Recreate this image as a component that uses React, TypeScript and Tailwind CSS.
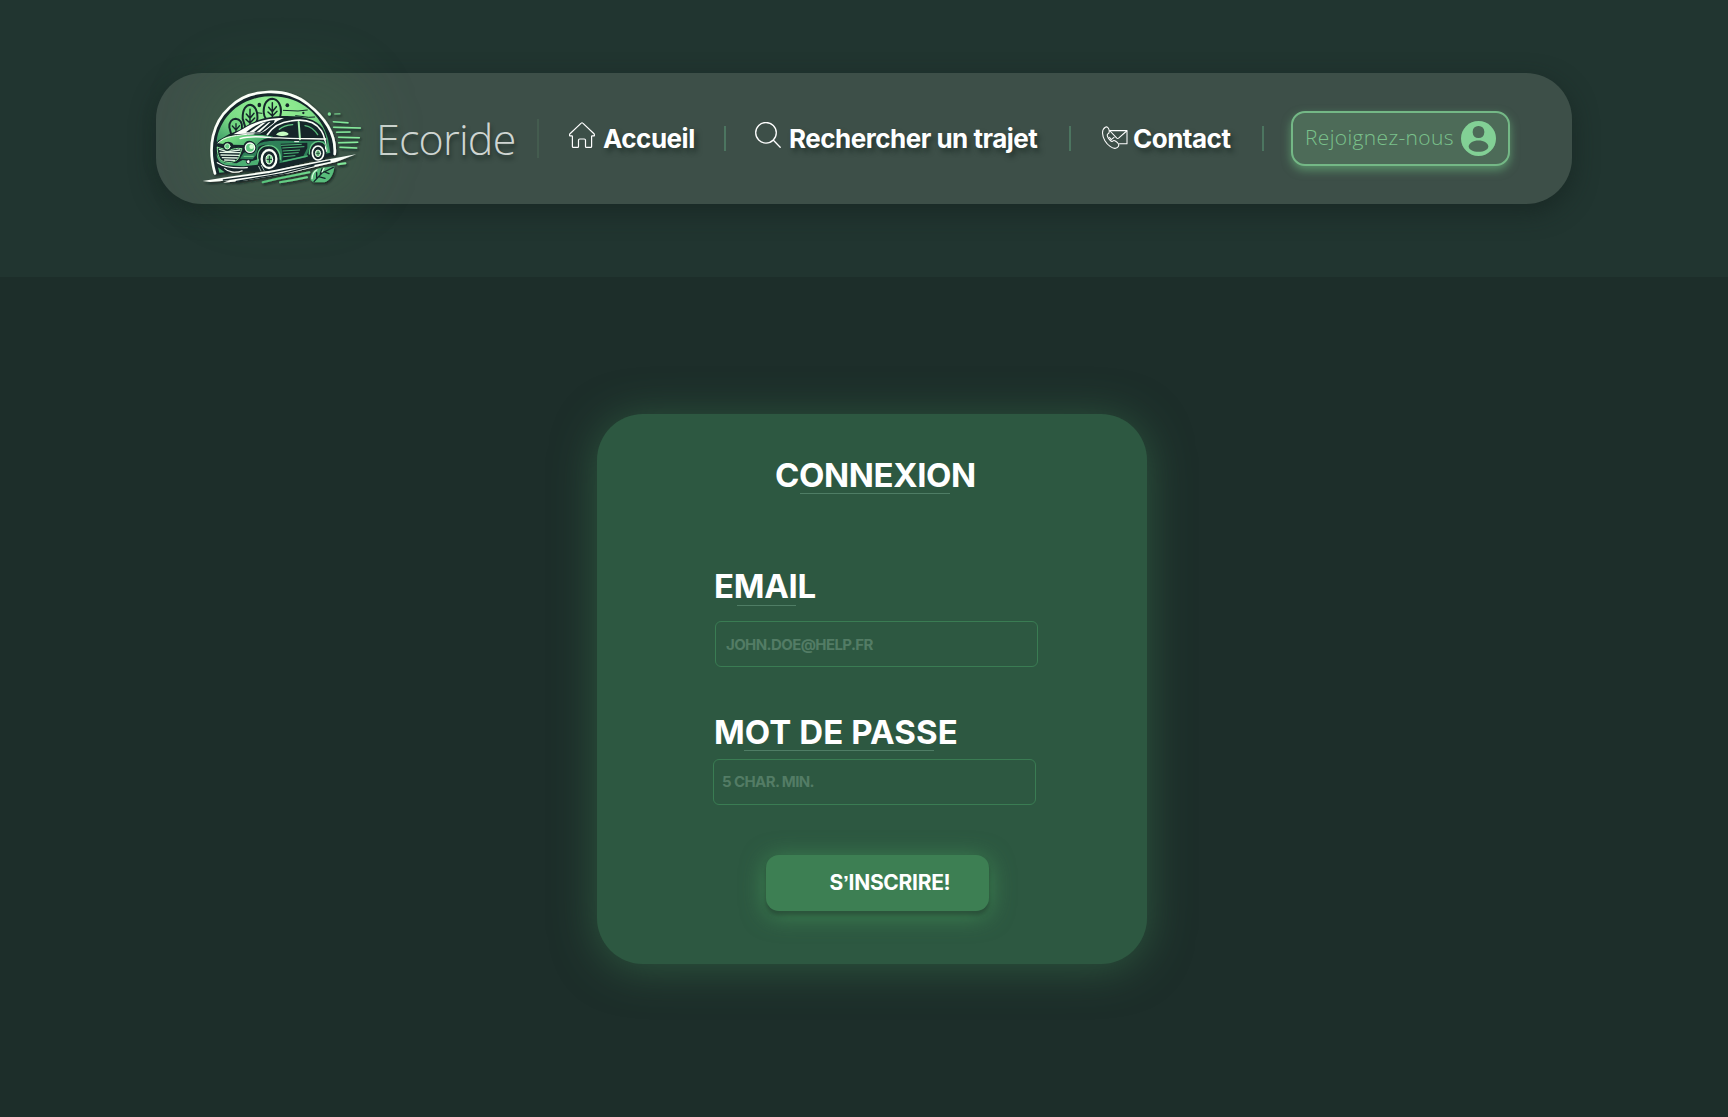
import React from "react";

function CarLogo() {
  const dark = "#14282b";
  const white = "#fbfff8";
  return (
    <svg viewBox="36 44 483 291" className="relative h-[97px] w-[161px] overflow-visible" fill="none" strokeLinecap="round" strokeLinejoin="round">
      <defs>
        <radialGradient id="sky" cx="0.5" cy="0.2" r="0.75">
          <stop offset="0" stopColor="#98f295" />
          <stop offset="0.55" stopColor="#7bdc86" />
          <stop offset="1" stopColor="#3f9d68" />
        </radialGradient>
        <linearGradient id="hood" x1="0" y1="0" x2="1" y2="0.3">
          <stop offset="0" stopColor="#8df08c" />
          <stop offset="0.6" stopColor="#5cc478" />
          <stop offset="1" stopColor="#3f9c68" />
        </linearGradient>
        <linearGradient id="speed" gradientUnits="userSpaceOnUse" x1="216" y1="0" x2="512" y2="0">
          <stop offset="0" stopColor="#58c37c" />
          <stop offset="1" stopColor="#8bf0a0" />
        </linearGradient>
        <filter id="cast" x="-10%" y="-10%" width="125%" height="125%">
          <feDropShadow dx="4" dy="5" stdDeviation="2.500" floodColor="#0d1b19" floodOpacity="0.8" />
        </filter>
      </defs>
      <g filter="url(#cast)">
        {/* arch */}
        <path d="M78 297C50 222 64 142 116 94C175 36 290 34 357 86C411 128 436 180 432 240L76 297Z" fill={dark} />
        <path d="M75 294C52 214 68 142 118 97C176 38 289 34 354 87C408 130 438 182 434 236" stroke={white} strokeWidth="8" />
        <path d="M80 196C90 128 148 64 243 63C336 62 394 122 414 190L421 232L404 236L370 190L300 130L150 180L82 202Z" fill="url(#sky)" />
        <path d="M84 276L88 292L104 291Z" fill="#57ba78" />
        {/* trees */}
        <g stroke={dark} strokeWidth="6">
          <path d="M118 156C117 140 126 130 137 130C150 131 158 142 156 160L150 178H124Z" fill="#72d681" />
          <path d="M138 145V180M127 152L138 164L149 151" strokeWidth="4" />
          <path d="M158 130C157 101 169 88 181 88C195 90 204 107 202 132L194 156H166Z" fill="#7fe287" />
          <path d="M180 102V150M169 116L180 129L192 114M168 132L180 143L194 128" strokeWidth="4.500" />
          <path d="M221 110C221 84 232 70 247 70C263 71 274 88 273 110C272 128 262 138 247 138C232 138 222 128 221 110Z" fill="#8bec90" />
          <path d="M247 82V134M236 96L247 109L259 94M234 110L247 122L261 108" strokeWidth="4.500" />
        </g>
        <g fill={dark}>
          <ellipse cx="208" cy="89" rx="5.500" ry="7" />
          <ellipse cx="292" cy="90" rx="5.500" ry="6" />
          <circle cx="340" cy="113" r="3.500" />
        </g>
        <path d="M280 105L324 107L352 104M317 121L356 126L374 125M200 112L216 114" stroke={dark} strokeWidth="3" />
        {/* body, windshield and roof */}
        <path d="M76 216L84 196L118 176L148 164C190 136 228 123 275 122C330 120 378 128 398 158C412 182 412 205 408 240L262 284L190 288L120 284L90 270C76 252 72 234 76 216Z" fill={dark} />
        <path d="M130 177L160 160C196 138 234 128 282 128L262 137L226 166L212 174C184 174 156 176 130 177Z" fill={white} />
        <path d="M168 171C190 152 216 138 254 134L252 142L213 172Z" fill={dark} />
        <path d="M178 170L216 144L228 141L192 170ZM200 170L236 141L242 140L210 170Z" fill={white} />
        <path d="M232 178C250 152 272 140 302 137C342 130 375 138 394 166C404 182 408 200 408 228" stroke={white} strokeWidth="5" />
        <path d="M268 162C278 153 294 149 308 148" stroke="#65c984" strokeWidth="4" />
        <path d="M345 151C362 154 374 164 383 178" stroke="#58b878" strokeWidth="4" />
        <path d="M326 140L330 192" stroke="#a6f0ae" strokeWidth="6" />
        <path d="M258 178C266 166 290 165 296 176C290 184 272 183 258 178Z" fill="#c6fdc2" />
        {/* hood and flank */}
        <path d="M86 204C96 184 118 180 164 178C196 177 226 179 250 184L222 192C208 198 202 206 198 214C192 192 168 190 161 209L130 208C124 197 108 197 100 206Z" fill="url(#hood)" />
        <path d="M84 203C100 184 142 178 190 176" stroke={white} strokeWidth="3" />
        <path d="M150 190C172 183 206 183 243 187C307 190 355 190 407 191" stroke={white} strokeWidth="4" />
        <path d="M206 206C222 194 266 196 310 197L405 198L406 207C388 193 364 202 358 220L348 246L268 264C276 224 243 196 206 214L198 240L188 252L150 250L160 234Z" fill="#2f8059" />
        <path d="M272 205L352 202L352 218L340 242L276 256C280 236 274 218 272 205Z" fill={dark} />
        <path d="M274 210L334 207M278 218L342 214M279 227L329 224M282 235L325 232M281 244L315 241" stroke="#4fb778" strokeWidth="3" />
        <path d="M314 199H326" stroke={white} strokeWidth="3" />
        <path d="M280 258L352 242" stroke="#4fb778" strokeWidth="4" />
        {/* front end */}
        <path d="M80 236C80 254 92 266 112 270L160 273L203 268L209 250L184 258L158 254L140 264L104 262C90 256 86 246 80 236Z" fill="#4cae72" />
        <path d="M82 216C81 237 88 255 100 258C120 265 136 260 145 250L156 220C142 217 130 221 121 224C105 223 94 219 82 216Z" fill={dark} stroke="#8be89b" strokeWidth="3" />
        <path d="M88 222L112 229L150 224M90 231L149 232M93 239L147 240M97 247L142 248M104 254L134 255" stroke="#e2f4e4" strokeWidth="4" />
        <path d="M82 262C104 276 133 280 172 277M104 280C116 292 140 294 156 286" stroke={white} strokeWidth="3.500" />
        <circle cx="112" cy="213" r="13" fill={dark} />
        <circle cx="112" cy="213" r="8" fill="#65c982" stroke="#d6ffd3" strokeWidth="3" />
        <circle cx="180" cy="217" r="19" fill={dark} />
        <circle cx="180" cy="217" r="14" fill="#63c982" stroke={white} strokeWidth="4" />
        <circle cx="185" cy="214" r="7" fill="#d4ffd2" />
        <circle cx="175" cy="259" r="6" fill={white} stroke={dark} strokeWidth="3" />
        <path d="M162 243H190" stroke="#75d58a" strokeWidth="3" />
        {/* wheels */}
        <path d="M204 254C198 226 216 209 238 211C258 212 272 229 271 252" stroke="#6cd08a" strokeWidth="4" />
        <ellipse cx="237" cy="251" rx="30" ry="35" fill={dark} />
        <ellipse cx="237" cy="251" rx="22" ry="27" stroke={white} strokeWidth="7" />
        <ellipse cx="238" cy="252" rx="10" ry="14" fill="#83dd94" stroke={white} strokeWidth="3" />
        <path d="M238 243V261M231 252H245" stroke={dark} strokeWidth="3" />
        <path d="M358 236C358 211 371 198 387 198C402 199 412 212 414 230" stroke="#64c885" strokeWidth="4" />
        <ellipse cx="384" cy="233" rx="24" ry="28" fill={dark} />
        <ellipse cx="384" cy="233" rx="17" ry="21" stroke={white} strokeWidth="5" />
        <ellipse cx="384" cy="234" rx="8" ry="10" fill="#83dd94" stroke={white} strokeWidth="2.500" />
        <path d="M384 228V240M379 234H389" stroke={dark} strokeWidth="2" />
        {/* road */}
        <path d="M38 317L118 304L250 285L360 262L498 237L438 260L300 293L170 315L100 322L120 315L60 320Z" fill={white} />
        <path d="M100 314L238 295L420 257M139 318L278 295L372 271" stroke={dark} strokeWidth="4" />
        <path d="M214 270L222 285M206 273L213 287" stroke="#a8b9b2" strokeWidth="3" />
        {/* speed stripes */}
        <g stroke="url(#speed)" strokeWidth="6">
          <path d="M218 321L262 310L358 291M270 321L310 314L351 306M445 267L466 264" />
          <path d="M434 116L450 115.500" strokeWidth="3" />
          <path d="M430 139L474 142M431 156L511 158M440 171L480 170M446 186L508 187M446 202L503 201M450 216L500 218" strokeWidth="4.500" />
        </g>
        <circle cx="418" cy="116" r="5" fill="#7fe095" />
        {/* leaf */}
        <path d="M362 314C360 295 371 281 392 278L433 273C432 297 419 317 404 321H370Z" fill="#58bd7b" />
        <path d="M372 319L396 293L430 276M380 309V292M391 296L396 280M386 304L405 309M402 289L417 295" stroke={dark} strokeWidth="4" />
        <path d="M366 310C367 297 372 288 381 283M396 290L402 279" stroke="#dcffe2" strokeWidth="3.500" />
      </g>
    </svg>
  );
}

function HomeIcon() {
  return (
    <svg viewBox="0 0 26 26" className="mb-[7px] size-[26px] shrink-0" fill="none" stroke="white" strokeWidth="1.2" strokeLinejoin="round" strokeLinecap="round">
      <path d="M12.2 1.1a1.1 1.1 0 0 1 1.6 0L25 11.7q.6.7.3 2.2h-2.2q-.5 0-.5.6v9.9q0 1-1 1h-4.300q-.8 0-.8-.9v-6.300q0-1.200-1.200-1.200h-4.600q-1.200 0-1.200 1.200v6.300q0 .9-.8.9H4.400q-1 0-1-1v-9.900q0-.600-.5-.600H.7q-.4-1.500.3-2.200Z" />
    </svg>
  );
}

function SearchIcon() {
  return (
    <svg viewBox="0 0 26 26" className="mb-[7px] size-[26px] shrink-0" fill="none" stroke="white" strokeWidth="1.3" strokeLinecap="round">
      <circle cx="11" cy="10.8" r="10.3" />
      <path d="M18.400 18.200L25.200 25.200" />
    </svg>
  );
}

function ContactIcon() {
  return (
    <svg viewBox="0 0 26 24" className="mb-[2px] h-[24px] w-[26px] shrink-0" fill="none" stroke="white" strokeWidth="1.050" strokeLinejoin="round" strokeLinecap="round">
      <path d="M3.300 1.200C5 .2 6.600 1.700 7.100 4C7.600 6.200 7.300 7.400 5.700 8.100C4.500 8.800 6 12 7.500 13.600C8.900 15.200 10 16 11.100 14.900C12.300 13.600 15.200 16.100 16.400 17.800C17.500 19.600 16 21.700 13.600 22.300C10.500 22.900 5.600 19.200 2.900 14.700C.2 10-.8 3.700 3.300 1.200Z" />
      <path d="M7.700 4.600H25V17.700H17.500" />
      <path d="M8 5L14.800 12.200Q15.700 12.900 16.600 12.200L24.700 5M7.500 11.300L9.200 13.600L12 11.300" />
    </svg>
  );
}

function UserIcon() {
  return (
    <svg viewBox="0 0 35 35" className="size-[35px] shrink-0">
      <circle cx="17.500" cy="17.500" r="17.500" fill="#82d095" />
      <rect x="11.700" y="5" width="11.600" height="12" rx="5.500" fill="#4d6b58" />
      <path d="M17.500 19.500C23 19.500 27.300 22.200 27.300 25.400C27.300 28.500 23 30.700 17.500 30.700S7.700 28.500 7.700 25.400C7.700 22.200 12 19.500 17.500 19.500Z" fill="#4d6b58" />
    </svg>
  );
}

const linkText =
  "whitespace-nowrap text-[26px] leading-[26px] font-bold tracking-[-0.500px] text-white [text-shadow:3px_4px_5px_rgba(20,35,30,0.55)]";

function NavBar() {
  return (
    <nav className="flex h-[131px] w-[1416px] items-center rounded-[46px] bg-[#3d4f48] pl-[46px] shadow-[0_8px_24px_rgba(20,34,30,0.6)]">
      <div className="relative flex h-[97px] w-[161px] items-center">
        <div className="absolute -inset-x-3 -inset-y-6 rounded-[60px] bg-[#3c8242]/16 blur-[24px]" />
        <CarLogo />
      </div>
      <span className="ml-[13px] w-[161px] whitespace-nowrap font-['Open_Sans'] text-[43px] leading-[50px] font-light tracking-[-0.800px] text-[#cfd5d2] [text-shadow:1px_4px_4px_rgba(15,28,24,0.6)]">
        Ecoride
      </span>
      <div className="h-[39px] w-[2px] bg-[#445c4f]" />
      <a className="ml-[30px] flex w-[155px] items-center gap-[8px]">
        <HomeIcon />
        <span className={linkText}>Accueil</span>
      </a>
      <div className="h-[25px] w-[2px] bg-[#4c7560]" />
      <a className="ml-[29px] flex w-[314px] items-center gap-[8px]">
        <SearchIcon />
        <span className={linkText}>Rechercher un trajet</span>
      </a>
      <div className="h-[25px] w-[2px] bg-[#4c7560]" />
      <a className="ml-[31px] flex w-[160px] items-center gap-[5px]">
        <ContactIcon />
        <span className={linkText}>Contact</span>
      </a>
      <div className="h-[25px] w-[2px] bg-[#4c7560]" />
      <button className="ml-[27px] flex h-[55px] w-[219px] items-center justify-between rounded-[14px] border-2 border-[#74b886] bg-[#4d6b58] px-[12px] shadow-[0_4px_10px_rgba(110,190,130,0.6)]">
        <span className="mb-[3px] whitespace-nowrap font-['Open_Sans'] text-[21px] leading-[28px] font-light tracking-[0.350px] text-[#7ac18b]">
          Rejoignez-nous
        </span>
        <UserIcon />
      </button>
    </nav>
  );
}

const labelText = "whitespace-nowrap text-[33px] leading-[36px] font-bold text-white";
const field =
  "block h-[46px] w-[323px] rounded-[6px] border border-[#3a7c53] bg-transparent text-[15px] font-bold tracking-[-0.600px] text-white outline-none placeholder:text-[#537c65] placeholder:opacity-100";

function LoginCard() {
  return (
    <form className="flex h-[550px] w-[550px] flex-col rounded-[46px] bg-[#2d5841] pt-[43px] shadow-[0_4px_44px_rgba(61,128,83,0.500)]">
      <h1 className={`${labelText} ml-[178px] tracking-[-0.400px]`}>CONNEXION</h1>
      <div className="ml-[203px] h-px w-[150px] bg-[#4f7d65]" />
      <label className={`${labelText} mt-[74px] ml-[117px] tracking-[-0.300px]`}>EMAIL</label>
      <div className="mt-px ml-[140px] h-px w-[59px] bg-[#4f7d65]" />
      <input className={`${field} mt-[15px] ml-[118px] pl-[10px]`} placeholder="JOHN.DOE@HELP.FR" />
      <label className={`${labelText} mt-[47px] ml-[117px] tracking-[0.100px]`}>MOT DE PASSE</label>
      <div className="ml-[147px] h-px w-[190px] bg-[#4f7d65]" />
      <input className={`${field} mt-[8px] ml-[116px] pb-px pl-[8px]`} placeholder="5 CHAR. MIN." />
      <button
        type="button"
        className="mt-[50px] ml-[169px] h-[56px] w-[223px] rounded-[13px] bg-[#3d7f53] pl-[25px] text-[21px] font-bold tracking-[-0.300px] text-white shadow-[0_4px_4px_rgba(30,50,42,0.500),0_4px_24px_rgba(72,160,92,0.700)]"
      >
        S<span className="font-['Liberation_Sans']">’</span>INSCRIRE!
      </button>
    </form>
  );
}

export default function App() {
  return (
    <div className="flex h-[1117px] w-[1728px] flex-col overflow-hidden bg-[#1d2e2a] font-['Inter','Liberation_Sans',sans-serif]">
      <header className="flex h-[277px] justify-center bg-[#213530] pt-[73px]">
        <NavBar />
      </header>
      <main className="pt-[137px] pl-[597px]">
        <LoginCard />
      </main>
    </div>
  );
}
